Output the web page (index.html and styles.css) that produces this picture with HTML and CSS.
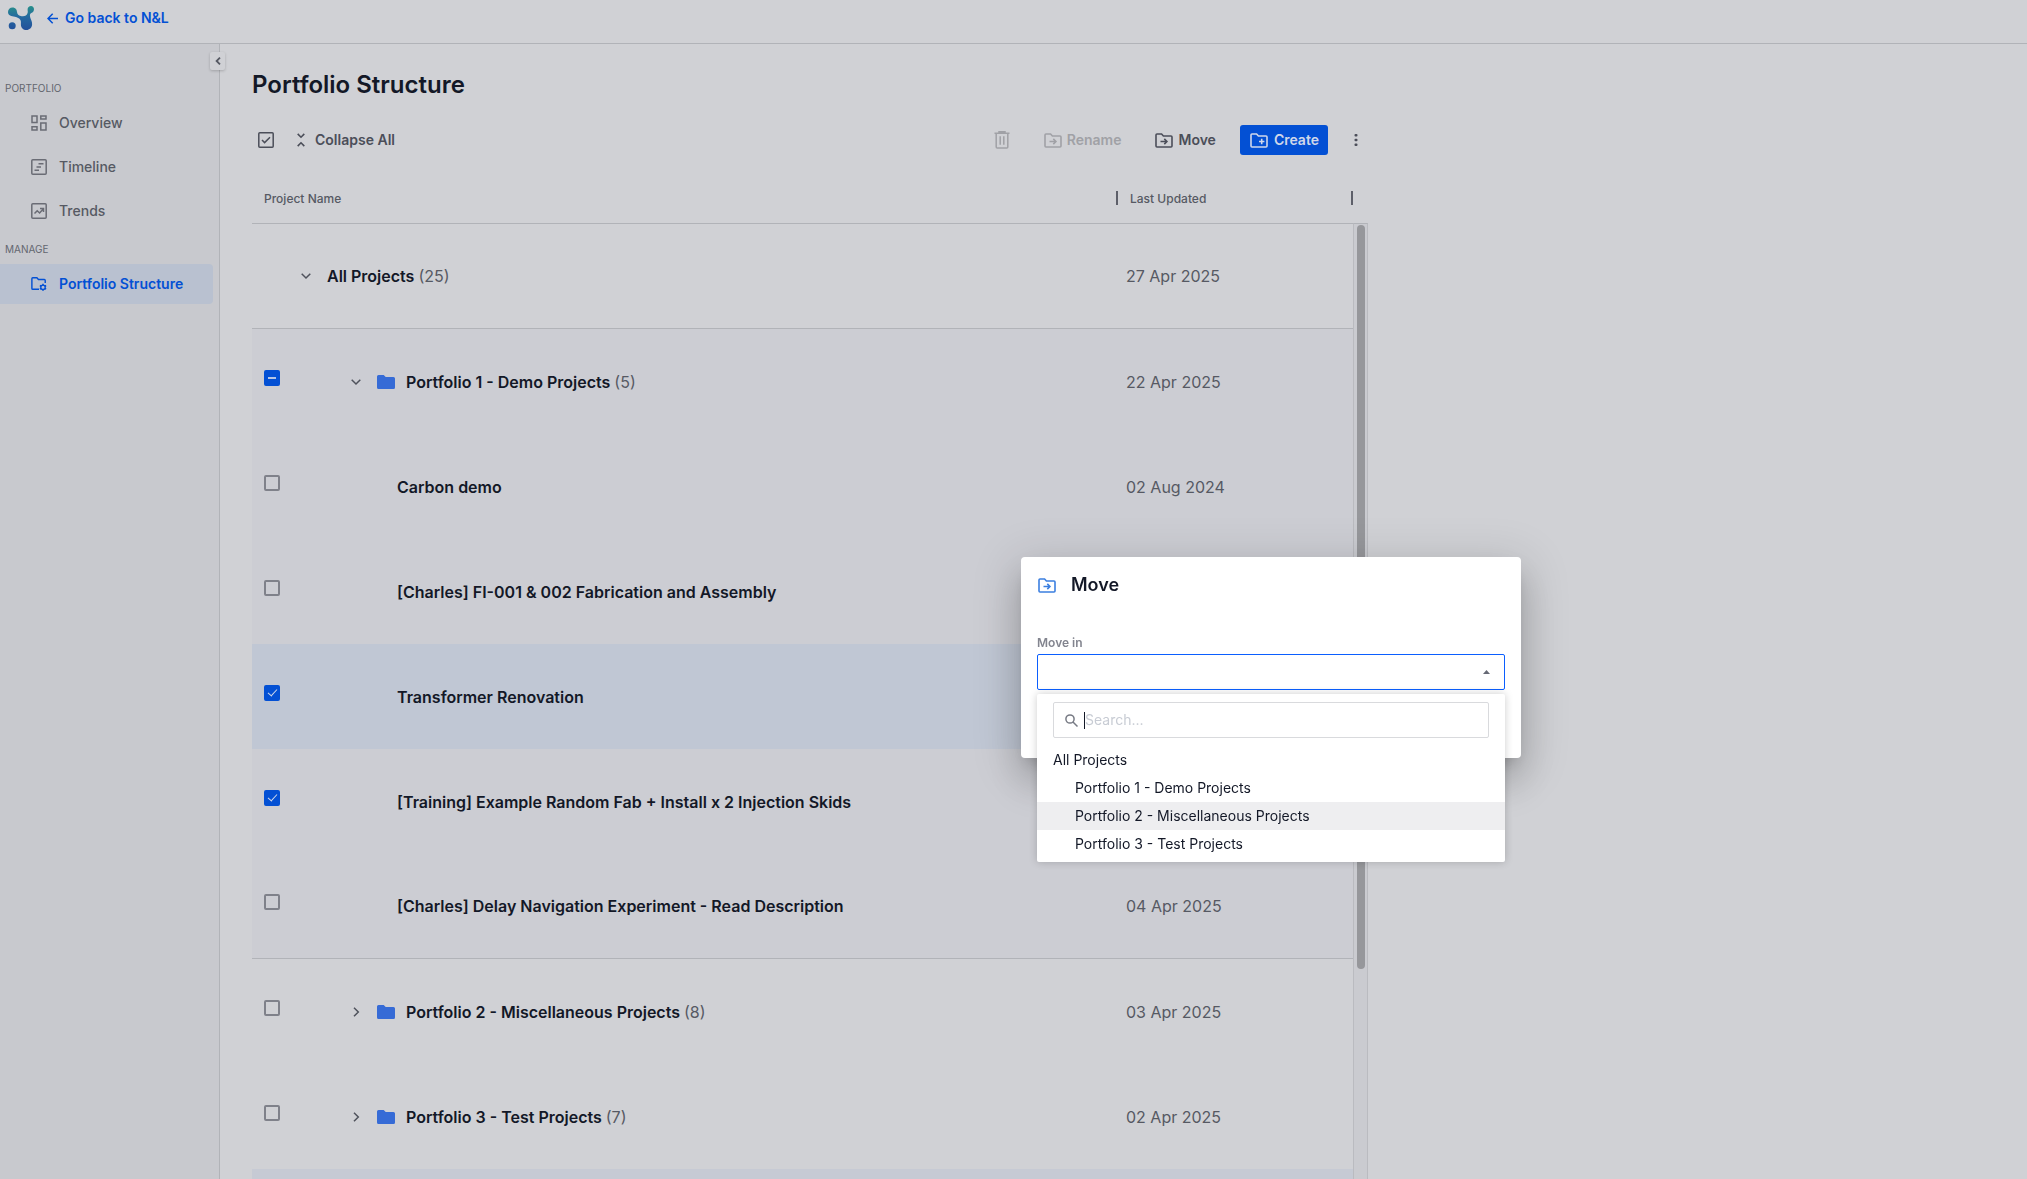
FILE: index.html
```html
<!DOCTYPE html>
<html lang="en">
<head>
<meta charset="utf-8">
<meta name="viewport" content="width=device-width, initial-scale=1">
<title>Portfolio Structure</title>
<link rel="stylesheet" href="styles.css">
</head>
<body>
<svg class="sprite" aria-hidden="true">
  <symbol id="folder-move" viewBox="0 0 18 15">
    <path d="M1 13V2q0-1 1-1h4.600l1.800 2H16q1 0 1 1v9q0 1-1 1H2q-1 0-1-1z" fill="none" stroke="currentColor" stroke-width="1.600"/>
    <path d="M5.500 8.500h6M9.300 5.900l2.600 2.600-2.600 2.600" fill="none" stroke="currentColor" stroke-width="1.600"/>
  </symbol>
  <symbol id="folder-add" viewBox="0 0 18 15">
    <path d="M1 13V2q0-1 1-1h4.600l1.800 2H16q1 0 1 1v9q0 1-1 1H2q-1 0-1-1z" fill="none" stroke="currentColor" stroke-width="1.600"/>
    <path d="M9 8.500h5.400M11.700 5.800v5.400" fill="none" stroke="currentColor" stroke-width="1.600"/>
  </symbol>
  <symbol id="folder" viewBox="0 0 18 14">
    <path d="M1.500 0h5.200l2 2H16.500q1.500 0 1.500 1.500v9q0 1.500-1.500 1.500h-15Q0 14 0 12.500v-11Q0 0 1.500 0z" fill="currentColor"/>
  </symbol>
  <symbol id="chevron-down" viewBox="0 0 10 10">
    <path d="M.700 2.700L5 7l4.300-4.300" fill="none" stroke="currentColor" stroke-width="1.500"/>
  </symbol>
  <symbol id="chevron-right" viewBox="0 0 10 10">
    <path d="M3 .700L7.300 5 3 9.300" fill="none" stroke="currentColor" stroke-width="1.500"/>
  </symbol>
</svg>

<header class="topbar">
  <svg class="logo" viewBox="0 0 26 24" aria-label="Logo">
    <defs>
      <linearGradient id="brand" gradientUnits="userSpaceOnUse" x1="0" y1="24" x2="0" y2="0">
        <stop offset="0" stop-color="#23509a"/>
        <stop offset=".550" stop-color="#2469a0"/>
        <stop offset="1" stop-color="#279089"/>
      </linearGradient>
    </defs>
    <g fill="url(#brand)">
      <path d="M4.500 1.500C7.500 1.500 8.900 3.800 9 6c.200 2.600 2.200 3.800 4.600 4.200 3 .500 5.200-.700 6-3.200.400-1.300 0-2 0-3.500C19.500 1.300 21.200 0 23 0s3 1.500 3 3.300c0 2-1.200 3.300-2.700 3.800-1.600.600-1.600 2.500-1 4.600.600 2 2 4 1.800 6.800-.200 3.200-2.700 5.500-5.600 5.500-3.200 0-5.600-2.500-5.600-5.600 0-1.600.300-3-.500-4.300-1-1.800-3-2.700-5.500-3.300C3.500 10.200 0 9.800 0 6c0-2.600 2-4.500 4.500-4.500z"/>
      <circle cx="4.200" cy="19.800" r="3.500"/>
    </g>
  </svg>
  <a class="back" href="#">
    <svg width="11" height="11" viewBox="0 0 11 11" aria-hidden="true"><path d="M11 5.500H1.200M5.700.700L1 5.500l4.700 4.800" fill="none" stroke="currentColor" stroke-width="1.500"/></svg>
    Go back to N&amp;L
  </a>
</header>

<div class="shell">
  <nav class="sidebar" aria-label="Portfolio">
    <button class="toggle" type="button" aria-label="Collapse sidebar">
      <svg width="6" height="8" viewBox="0 0 6 8"><path d="M5 .600L1.600 4 5 7.400" fill="none" stroke="currentColor" stroke-width="1.800"/></svg>
    </button>
    <h2 class="nav-title">PORTFOLIO</h2>
    <a class="nav-item" href="#">
      <svg width="16" height="16" viewBox="0 0 16 16" fill="none" stroke="currentColor" stroke-width="1.500" aria-hidden="true"><path d="M1 1h5v6.500H1zM9.800 1H15v3H9.800zM1 11.800h5V15H1zM9.800 8H15v7H9.800z"/></svg>
      Overview
    </a>
    <a class="nav-item" href="#">
      <svg width="16" height="16" viewBox="0 0 16 16" fill="none" stroke="currentColor" stroke-width="1.500" aria-hidden="true"><rect x=".800" y=".800" width="14.400" height="14.400" rx="1"/><path d="M7.500 4.700h5M5.500 8h4.500M3.500 11.300h4.500"/></svg>
      Timeline
    </a>
    <a class="nav-item" href="#">
      <svg width="16" height="16" viewBox="0 0 16 16" fill="none" stroke="currentColor" stroke-width="1.500" aria-hidden="true"><rect x=".800" y=".800" width="14.400" height="14.400" rx="1"/><path d="M3.500 10.600l2.700-2.900L8.600 10l3.600-4M9 5.600h3.500V9"/></svg>
      Trends
    </a>
    <h2 class="nav-title">MANAGE</h2>
    <a class="nav-item active" href="#" aria-current="page">
      <svg width="18" height="16" viewBox="0 0 18 16" fill="none" stroke="currentColor" aria-hidden="true"><path d="M9 14H2q-1 0-1-1V2q0-1 1-1h4.600l1.800 2H15q1 0 1 1v3" stroke-width="1.600"/><circle cx="13.500" cy="11.700" r="2.500" stroke-width="1.500"/><path d="M13.500 7.700v1.600M13.500 14.100v1.600M10 9.700l1.400.800M15.600 12.900l1.400.800M10 13.700l1.400-.800M15.600 10.500l1.400-.800" stroke-width="1.700"/></svg>
      Portfolio Structure
    </a>
  </nav>

  <main class="content">
    <h1>Portfolio Structure</h1>

    <div class="toolbar">
      <button class="tool select-all" type="button" aria-label="Select all">
        <svg width="16" height="16" viewBox="0 0 16 16" fill="none" stroke="currentColor" stroke-width="1.500"><rect x=".800" y=".800" width="14.400" height="14.400" rx="1"/><path d="M4 8l2.600 2.600L12 5.200"/></svg>
      </button>
      <button class="tool collapse" type="button">
        <svg width="8" height="14" viewBox="0 0 8 14" fill="none" stroke="currentColor" stroke-width="1.600" aria-hidden="true"><path d="M.700.900L4 4.200 7.300.900M.700 13.100L4 9.800l3.300 3.300"/></svg>
        Collapse All
      </button>
      <div class="actions">
        <button class="tool" type="button" disabled aria-label="Delete">
          <svg width="16" height="18" viewBox="0 0 16 18" fill="none" stroke="currentColor" stroke-width="1.500"><path d="M.500 2.200h15M5 2V.800h6V2M2.200 2.500V16q0 1 1 1h9.600q1 0 1-1V2.500M6.200 5.200v8.600M9.800 5.200v8.600"/></svg>
        </button>
        <button class="tool" type="button" disabled><svg width="18" height="15" aria-hidden="true"><use href="#folder-move"/></svg>Rename</button>
        <button class="tool" type="button"><svg width="18" height="15" aria-hidden="true"><use href="#folder-move"/></svg>Move</button>
        <button class="tool primary" type="button"><svg width="18" height="15" aria-hidden="true"><use href="#folder-add"/></svg>Create</button>
        <button class="tool more" type="button" aria-label="More actions">
          <svg width="4" height="12" viewBox="0 0 4 12" fill="currentColor"><rect x=".500" width="3" height="2.600" rx="1"/><rect x=".500" y="4.700" width="3" height="2.600" rx="1"/><rect x=".500" y="9.400" width="3" height="2.600" rx="1"/></svg>
        </button>
      </div>
    </div>

    <div class="grid">
      <table class="projects">
        <colgroup>
          <col class="col-check">
          <col>
          <col class="col-date">
        </colgroup>
        <thead>
          <tr>
            <th colspan="2" scope="col">Project Name</th>
            <th class="date-head" scope="col">Last Updated</th>
          </tr>
        </thead>
        <tbody>
          <tr class="ruled">
            <td class="check"></td>
            <td><div class="name level-0"><svg class="chevron" aria-hidden="true"><use href="#chevron-down"/></svg><span>All Projects <span class="count">(25)</span></span></div></td>
            <td class="date">27 Apr 2025</td>
          </tr>
          <tr class="tinted">
            <td class="check"><input type="checkbox" class="partial" aria-label="Portfolio 1 - Demo Projects"></td>
            <td><div class="name level-1"><svg class="chevron" aria-hidden="true"><use href="#chevron-down"/></svg><svg class="folder" aria-hidden="true"><use href="#folder"/></svg><span>Portfolio 1 - Demo Projects <span class="count">(5)</span></span></div></td>
            <td class="date">22 Apr 2025</td>
          </tr>
          <tr class="tinted">
            <td class="check"><input type="checkbox" aria-label="Carbon demo"></td>
            <td><div class="name level-2">Carbon demo</div></td>
            <td class="date">02 Aug 2024</td>
          </tr>
          <tr class="tinted">
            <td class="check"><input type="checkbox" aria-label="[Charles] FI-001 &amp; 002 Fabrication and Assembly"></td>
            <td><div class="name level-2">[Charles] FI-001 &amp; 002 Fabrication and Assembly</div></td>
            <td class="date"></td>
          </tr>
          <tr class="selected">
            <td class="check"><input type="checkbox" checked aria-label="Transformer Renovation"></td>
            <td><div class="name level-2">Transformer Renovation</div></td>
            <td class="date"></td>
          </tr>
          <tr class="tinted">
            <td class="check"><input type="checkbox" checked aria-label="[Training] Example Random Fab + Install x 2 Injection Skids"></td>
            <td><div class="name level-2">[Training] Example Random Fab + Install x 2 Injection Skids</div></td>
            <td class="date"></td>
          </tr>
          <tr class="tinted ruled">
            <td class="check"><input type="checkbox" aria-label="[Charles] Delay Navigation Experiment - Read Description"></td>
            <td><div class="name level-2">[Charles] Delay Navigation Experiment - Read Description</div></td>
            <td class="date">04 Apr 2025</td>
          </tr>
          <tr>
            <td class="check"><input type="checkbox" aria-label="Portfolio 2 - Miscellaneous Projects"></td>
            <td><div class="name level-1"><svg class="chevron" aria-hidden="true"><use href="#chevron-right"/></svg><svg class="folder" aria-hidden="true"><use href="#folder"/></svg><span>Portfolio 2 - Miscellaneous Projects <span class="count">(8)</span></span></div></td>
            <td class="date">03 Apr 2025</td>
          </tr>
          <tr>
            <td class="check"><input type="checkbox" aria-label="Portfolio 3 - Test Projects"></td>
            <td><div class="name level-1"><svg class="chevron" aria-hidden="true"><use href="#chevron-right"/></svg><svg class="folder" aria-hidden="true"><use href="#folder"/></svg><span>Portfolio 3 - Test Projects <span class="count">(7)</span></span></div></td>
            <td class="date">02 Apr 2025</td>
          </tr>
          <tr class="hovered">
            <td class="check"></td>
            <td></td>
            <td class="date"></td>
          </tr>
        </tbody>
      </table>
      <div class="track"><div class="thumb"></div></div>
    </div>
  </main>
</div>

<div class="dialog" role="dialog" aria-labelledby="dialog-title">
  <div class="dialog-head">
    <svg width="18" height="15" aria-hidden="true"><use href="#folder-move"/></svg>
    <h2 id="dialog-title">Move</h2>
  </div>
  <label class="field-label" for="target">Move in</label>
  <div class="field">
    <select id="target"><option value=""></option><option>All Projects</option></select>
    <svg class="arrow" width="7" height="4" viewBox="0 0 7 4" aria-hidden="true"><path d="M0 4L3.500 0 7 4z" fill="currentColor"/></svg>
    <div class="menu">
      <label class="search">
        <svg width="13" height="13" viewBox="0 0 13 13" fill="none" stroke="currentColor" stroke-width="1.500" aria-hidden="true"><circle cx="5" cy="5" r="4.100"/><path d="M8 8l4.500 4.500"/></svg>
        <span class="caret"></span>
        <input type="text" placeholder="Search..." aria-label="Search">
      </label>
      <ul role="listbox" aria-label="Move in">
        <li role="option">All Projects</li>
        <li class="nested" role="option">Portfolio 1 - Demo Projects</li>
        <li class="nested current" role="option" aria-selected="true">Portfolio 2 - Miscellaneous Projects</li>
        <li class="nested" role="option">Portfolio 3 - Test Projects</li>
      </ul>
    </div>
  </div>
</div>
</body>
</html>
```
FILE: styles.css
```css
* { box-sizing: border-box; }

:root {
  --page: #d0d1d5;
  --side: #c8c9ce;
  --line: #b1b3b8;
  --ink: #131827;
  --muted: #565963;
  --blue: #0350d4;
}

body {
  margin: 0;
  height: 100vh;
  overflow: hidden;
  display: flex;
  flex-direction: column;
  background: var(--page);
  color: var(--ink);
  font: 14px/20px Inter, "Liberation Sans", sans-serif;
}

h1, h2, ul { margin: 0; padding: 0; }
button, input, select { font: inherit; color: inherit; }
a { text-decoration: none; }
svg { flex: none; }
.sprite { position: absolute; width: 0; height: 0; }

/* Top bar */
.topbar {
  flex: none;
  display: flex;
  align-items: flex-start;
  gap: 13px;
  height: 44px;
  padding: 6px 8px;
  border-bottom: 1px solid var(--line);
}
.logo { width: 26px; height: 24px; }
.back {
  display: flex;
  align-items: center;
  gap: 7px;
  padding-top: 2px;
  color: var(--blue);
  font-weight: 600;
}

/* Sidebar */
.shell { flex: 1; min-height: 0; display: flex; }
.sidebar {
  position: relative;
  flex: none;
  width: 220px;
  padding: 34px 6px 0 0;
  background: var(--side);
  border-right: 1px solid var(--line);
}
.toggle {
  position: absolute;
  top: 8px;
  right: -6px;
  width: 15px;
  height: 18px;
  padding: 0;
  display: flex;
  align-items: center;
  justify-content: center;
  border: 0;
  border-radius: 2px;
  background: var(--page);
  color: var(--muted);
  box-shadow: 0 1px 3px rgba(0, 0, 0, .2);
}
.nav-title {
  padding: 0 5px 5px;
  color: #63666f;
  font-size: 10px;
  font-weight: 400;
}
.nav-item {
  display: flex;
  align-items: center;
  gap: 12px;
  height: 40px;
  margin-bottom: 4px;
  padding-left: 31px;
  border-radius: 0 4px 4px 0;
  color: var(--muted);
  font-weight: 500;
}
.nav-item + .nav-title { padding-top: 4px; }
.nav-item svg { width: 16px; color: #6a6c75; overflow: visible; }
.nav-item.active { background: #b9c1d0; color: var(--blue); font-weight: 600; }
.nav-item.active svg { color: inherit; }

/* Content */
.content { flex: 1; min-width: 0; padding: 25px 32px 0; }
h1 { font-size: 24px; line-height: 32px; font-weight: 600; }
.toolbar {
  display: flex;
  align-items: center;
  max-width: 1116px;
  margin: 24px 0 19px;
  padding-left: 6px;
}
.tool {
  display: flex;
  align-items: center;
  gap: 5px;
  height: 30px;
  padding: 0;
  border: 0;
  border-radius: 3px;
  background: none;
  color: #4b4e59;
  font-weight: 600;
}
.tool:disabled { color: #a0a1a6; }
.collapse { gap: 10px; margin-left: 23px; }
.actions { display: flex; margin-left: auto; gap: 34px; }
.actions .primary {
  gap: 6px;
  margin-left: -10px;
  padding: 0 9px 0 10px;
  background: var(--blue);
  color: #d0d8ea;
}
.actions .more { margin: 0 10px 0 -8px; }

/* Project table */
.grid { display: flex; max-width: 1116px; }
.projects {
  flex: 1;
  table-layout: fixed;
  width: 100%;
  border-collapse: separate;
  border-spacing: 0;
}
.col-check { width: 39px; }
.col-date { width: 237px; }
th {
  position: relative;
  height: 50px;
  padding: 0 12px;
  border-bottom: 1px solid var(--line);
  color: var(--muted);
  font-size: 12px;
  font-weight: 500;
  text-align: left;
}
.date-head { padding-left: 14px; }
.date-head::before, .date-head::after {
  content: "";
  position: absolute;
  top: 17px;
  width: 2px;
  height: 14px;
  background: #5d5f69;
}
.date-head::before { left: 0; }
.date-head::after { right: 0; }
td { height: 105px; padding: 0; font-size: 16px; }
.check { padding: 0 0 8px 12px; }
.date { padding-left: 10px; color: var(--muted); }
.ruled td { border-bottom: 1px solid var(--line); }
.tinted td { background: #cccdd3; }
.selected td { background: #c0c7d4; }
.hovered td { background: #c6cad4; }

.name { display: flex; align-items: center; font-weight: 600; }
.level-0 { padding-left: 10px; }
.level-1 { padding-left: 60px; }
.level-2 { padding-left: 106px; }
.chevron { width: 10px; height: 10px; margin-right: 16px; color: #4f525c; }
.folder { width: 18px; height: 14px; margin-right: 11px; color: #366bd6; }
.count { color: var(--muted); font-weight: 400; }

input[type="checkbox"] {
  appearance: none;
  display: grid;
  place-items: center;
  width: 16px;
  height: 16px;
  margin: 0;
  border: 2px solid #7f818a;
  border-radius: 2px;
}
input[type="checkbox"]:checked, input.partial { border-color: var(--blue); background: var(--blue); }
input[type="checkbox"]:checked::after {
  content: "";
  width: 4px;
  height: 8px;
  margin-bottom: 2px;
  border: solid #d0d8ea;
  border-width: 0 1px 1px 0;
  transform: rotate(42deg);
}
input.partial::after { content: ""; width: 8px; height: 2px; background: #b5c5e6; }

.track {
  flex: none;
  width: 15px;
  margin-top: 49px;
  padding: 1px 2px 0 3px;
  border: solid #babbc0;
  border-width: 1px 1px 0;
  border-top-color: var(--line);
  background: #cacbd0;
}
.thumb { width: 8px; height: 744px; border-radius: 4px; background: #96979b; }

/* Move dialog, floating over the page */
.dialog {
  position: fixed;
  top: 557px;
  left: 1021px;
  width: 500px;
  padding: 16px 16px 68px;
  border-radius: 4px;
  background: #fff;
  box-shadow: 0 11px 15px -7px rgba(0, 0, 0, .2), 0 24px 38px 3px rgba(0, 0, 0, .14), 0 9px 46px 8px rgba(0, 0, 0, .12);
}
.dialog-head { display: flex; align-items: center; gap: 15px; padding-left: 1px; color: #3b7fe0; }
.dialog-head h2 { color: var(--ink); font-size: 18px; line-height: 24px; font-weight: 600; }
.field-label {
  display: block;
  margin-top: 36px;
  padding-bottom: 1px;
  color: #83858f;
  font-size: 12px;
  font-weight: 600;
}
.field { position: relative; color: #666975; }
.field select {
  appearance: none;
  display: block;
  width: 100%;
  height: 36px;
  border: 1px solid #0b5fff;
  border-radius: 2px;
  background: #fff;
}
.arrow { position: absolute; top: 16px; right: 15px; }
.menu {
  position: absolute;
  top: 40px;
  left: 0;
  right: 0;
  padding: 8px 0 4px;
  border-radius: 2px;
  background: #fff;
  color: var(--ink);
  box-shadow: 0 0 8px rgba(0, 0, 0, .2);
}
.search {
  display: flex;
  align-items: center;
  height: 36px;
  margin: 0 16px 8px;
  padding: 0 11px;
  border: 1px solid #d9dadd;
  border-radius: 2px;
  color: #777a84;
}
.caret { width: 1px; height: 17px; margin-left: 6px; background: #131827; }
.search input { flex: 1; min-width: 0; padding: 0; border: 0; outline: 0; background: none; }
.search input::placeholder { color: #c8ccd4; opacity: 1; }
.menu ul { list-style: none; }
.menu li { padding: 4px 16px; }
.menu .nested { padding-left: 38px; }
.menu .current { background: #eeeef0; }
```
